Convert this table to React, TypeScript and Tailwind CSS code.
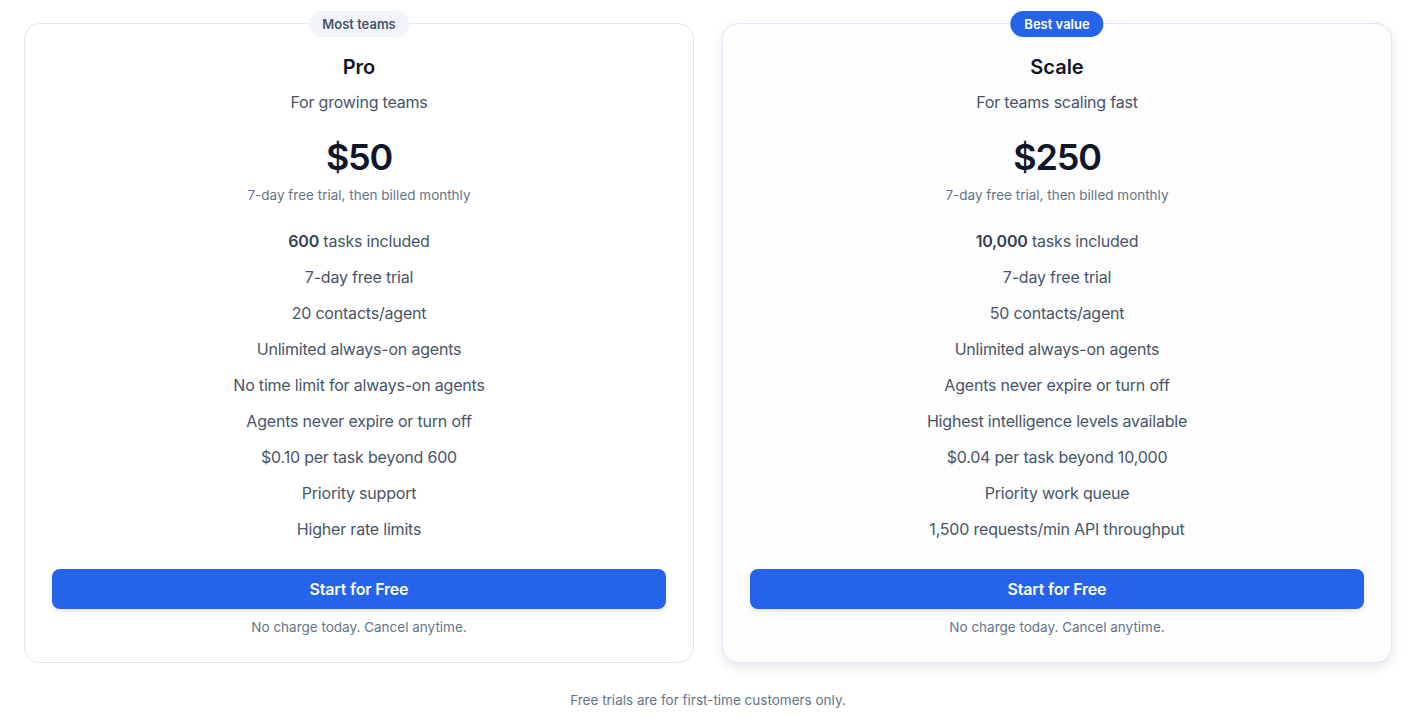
import React from "react";

type Plan = {
  name: string;
  tagline: string;
  price: string;
  badge: string;
  featured: boolean;
  features: React.ReactNode[];
};

const plans: Plan[] = [
  {
    name: "Pro",
    tagline: "For growing teams",
    price: "$50",
    badge: "Most teams",
    featured: false,
    features: [
      <>
        <span className="font-semibold text-[#334155]">600</span> tasks included
      </>,
      "7-day free trial",
      "20 contacts/agent",
      "Unlimited always-on agents",
      "No time limit for always-on agents",
      "Agents never expire or turn off",
      "$0.10 per task beyond 600",
      "Priority support",
      "Higher rate limits",
    ],
  },
  {
    name: "Scale",
    tagline: "For teams scaling fast",
    price: "$250",
    badge: "Best value",
    featured: true,
    features: [
      <>
        <span className="font-semibold text-[#334155]">10,000</span> tasks included
      </>,
      "7-day free trial",
      "50 contacts/agent",
      "Unlimited always-on agents",
      "Agents never expire or turn off",
      "Highest intelligence levels available",
      "$0.04 per task beyond 10,000",
      "Priority work queue",
      "1,500 requests/min API throughput",
    ],
  },
];

function Card({ plan }: { plan: Plan }) {
  return (
    <div
      className={
        plan.featured
          ? "relative flex flex-col items-center rounded-2xl border border-[#e6e4f6] bg-[#fdfdfe] px-[27px] pt-[29px] pb-[25px] text-center shadow-[0_4px_12px_rgba(30,30,80,0.10)]"
          : "relative flex flex-col items-center rounded-2xl border border-[#e2e8f0] bg-white px-[27px] pt-[29px] pb-[25px] text-center"
      }
    >
      <div
        className={
          plan.featured
            ? "absolute -top-[13px] left-1/2 -translate-x-1/2 rounded-full bg-[#2563eb] px-[14px] h-[26px] flex items-center pt-px text-[13px] font-semibold text-white"
            : "absolute -top-[13px] left-1/2 -translate-x-1/2 rounded-full bg-[#f1f5f9] px-[13px] h-[26px] flex items-center pt-px text-[13px] font-semibold text-[#475569]"
        }
      >
        {plan.badge}
      </div>
      <h3 className="text-[20px] leading-7 font-semibold text-[#0f172a]">{plan.name}</h3>
      <p className="mt-[9px] text-[16px] leading-6 tracking-[-0.2px] text-[#475569]">{plan.tagline}</p>
      <div className="mt-[23px] text-[36px] leading-10 font-semibold text-[#0f172a] tracking-[-1.2px]">
        {plan.price}
      </div>
      <p className="mt-2 text-[13.5px] leading-5 text-[#64748b]">
        7-day free trial, then billed monthly
      </p>
      <ul className="mt-6 flex flex-col gap-3 text-[16px] leading-6 tracking-[-0.2px] text-[#475569]">
        {plan.features.map((f, i) => (
          <li key={i}>{f}</li>
        ))}
      </ul>
      <div className="flex-1" />
      <button className="mt-7 h-10 w-full rounded-lg bg-[#2563eb] text-[16px] tracking-[-0.2px] font-semibold text-white shadow-[0_2px_4px_rgba(15,23,42,0.12)]">
        Start for Free
      </button>
      <p className="mt-2 text-[13.5px] leading-5 text-[#64748b]">No charge today. Cancel anytime.</p>
    </div>
  );
}

export default function App() {
  return (
    <div
      className="min-h-[715px] bg-white px-6 pt-[23px]"
      style={{ fontFamily: "Inter, 'Noto Sans', sans-serif" }}
    >
      <div className="grid grid-cols-2 gap-7">
        {plans.map((p) => (
          <Card key={p.name} plan={p} />
        ))}
      </div>
      <p className="mt-[27px] text-center text-[13.5px] leading-5 text-[#64748b]">
        Free trials are for first-time customers only.
      </p>
    </div>
  );
}
